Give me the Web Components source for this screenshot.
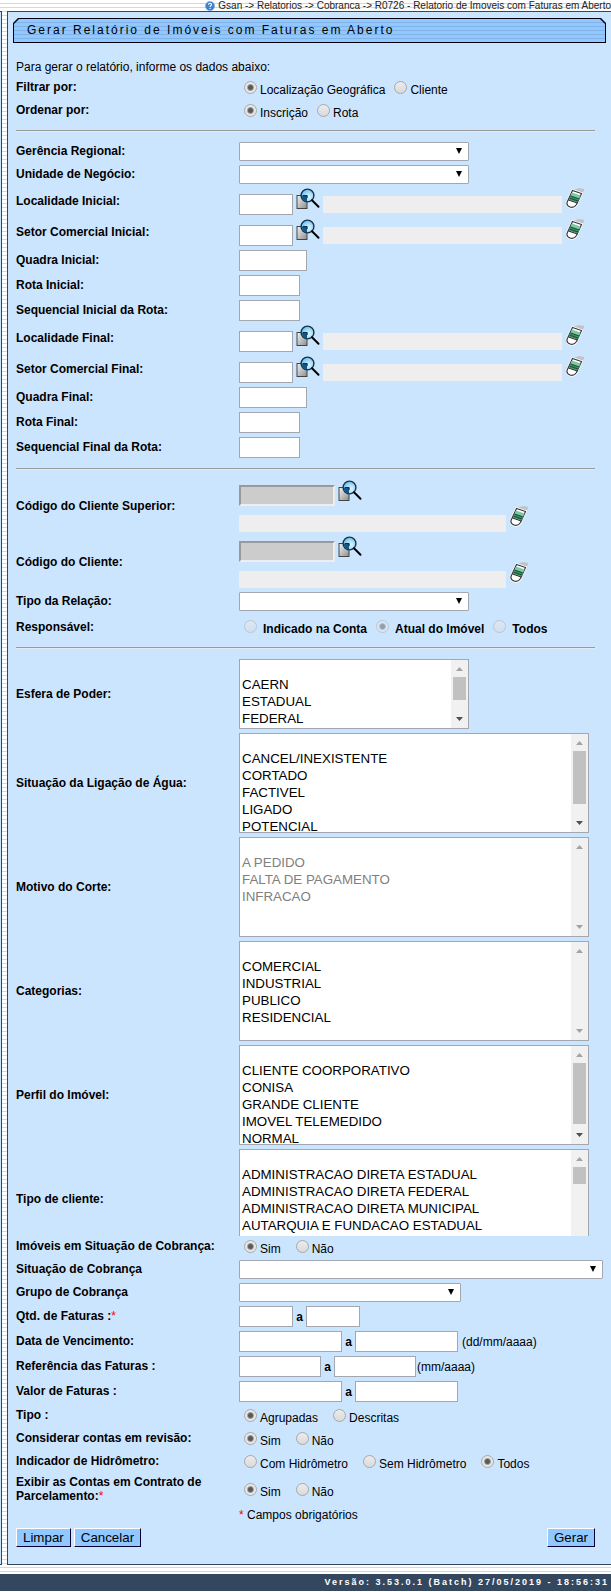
<!DOCTYPE html>
<html lang="pt-BR">
<head>
<meta charset="utf-8">
<title>Gsan - Relatório de Imóveis com Faturas em Aberto</title>
<style>
  body {
    margin: 0;
    background: #fff;
    color: #000;
    font: 12px/14px "Liberation Sans", Arial, sans-serif;
  }
</style>
</head>
<body>

<report-page>
  <trail-bar slot="trail">Gsan -&gt; Relatorios -&gt; Cobranca -&gt; R0726 - Relatorio de Imoveis com Faturas em Aberto</trail-bar>
  <title-bar>Gerar Relatório de Imóveis com Faturas em Aberto</title-bar>

  <report-form>
    <div>Para gerar o relatório, informe os dados abaixo:</div>
    <radio-row label="Filtrar por:" options="Localização Geográfica|Cliente" checked="0"></radio-row>
    <radio-row label="Ordenar por:" options="Inscrição|Rota" checked="0"></radio-row>
    <line-row></line-row>

    <select-row label="Gerência Regional:" width="230px"></select-row>
    <select-row label="Unidade de Negócio:" width="230px"></select-row>
    <lookup-row label="Localidade Inicial:"></lookup-row>
    <lookup-row label="Setor Comercial Inicial:"></lookup-row>
    <text-row label="Quadra Inicial:" width="68px"></text-row>
    <text-row label="Rota Inicial:" width="61px"></text-row>
    <text-row label="Sequencial Inicial da Rota:" width="61px"></text-row>
    <lookup-row label="Localidade Final:"></lookup-row>
    <lookup-row label="Setor Comercial Final:"></lookup-row>
    <text-row label="Quadra Final:" width="68px"></text-row>
    <text-row label="Rota Final:" width="61px"></text-row>
    <text-row label="Sequencial Final da Rota:" width="61px"></text-row>
    <line-row></line-row>

    <client-row label="Código do Cliente Superior:"></client-row>
    <client-row label="Código do Cliente:"></client-row>
    <select-row label="Tipo da Relação:" width="230px"></select-row>
    <radio-row class="strong" label="Responsável:" options="Indicado na Conta|Atual do Imóvel|Todos" checked="1" disabled></radio-row>
    <line-row></line-row>

    <list-row label="Esfera de Poder:" width="230px" height="70px" thumb="23px"
      options="CAERN|ESTADUAL|FEDERAL|MUNICIPAL|PARTICULAR"></list-row>
    <list-row label="Situação da Ligação de Água:" thumb="53px"
      options="CANCEL/INEXISTENTE|CORTADO|FACTIVEL|LIGADO|POTENCIAL|SUPRIMIDO"></list-row>
    <list-row label="Motivo do Corte:" disabled
      options="A PEDIDO|FALTA DE PAGAMENTO|INFRACAO"></list-row>
    <list-row label="Categorias:"
      options="COMERCIAL|INDUSTRIAL|PUBLICO|RESIDENCIAL"></list-row>
    <list-row label="Perfil do Imóvel:" thumb="61px"
      options="CLIENTE COORPORATIVO|CONISA|GRANDE CLIENTE|IMOVEL TELEMEDIDO|NORMAL|SOCIAL"></list-row>
    <list-row class="cut" label="Tipo de cliente:" thumb="17px"
      options="ADMINISTRACAO DIRETA ESTADUAL|ADMINISTRACAO DIRETA FEDERAL|ADMINISTRACAO DIRETA MUNICIPAL|AUTARQUIA E FUNDACAO ESTADUAL"></list-row>

    <radio-row class="wide" label="Imóveis em Situação de Cobrança:" options="Sim|Não" checked="0"></radio-row>
    <select-row label="Situação de Cobrança" width="calc(100% + 8px)"></select-row>
    <select-row label="Grupo de Cobrança" width="222px"></select-row>
    <text-row label="Qtd. de Faturas :" required width="54px" range></text-row>
    <text-row label="Data de Vencimento:" width="103px" range hint="(dd/mm/aaaa)"></text-row>
    <text-row class="tight" label="Referência das Faturas :" width="82px" range hint="(mm/aaaa)"></text-row>
    <text-row label="Valor de Faturas :" width="103px" range></text-row>
    <radio-row class="wide" label="Tipo :" options="Agrupadas|Descritas" checked="0"></radio-row>
    <radio-row class="wide" label="Considerar contas em revisão:" options="Sim|Não" checked="0"></radio-row>
    <radio-row class="wide" label="Indicador de Hidrômetro:" options="Com Hidrômetro|Sem Hidrômetro|Todos" checked="2"></radio-row>
    <radio-row class="wide" label="Exibir as Contas em Contrato de Parcelamento:" required options="Sim|Não" checked="0"></radio-row>
    <note-row>Campos obrigatórios</note-row>

    <form-button slot="left">Limpar</form-button>
    <form-button slot="left">Cancelar</form-button>
    <form-button slot="right">Gerar</form-button>
  </report-form>

  <span slot="version">Versão: 3.53.0.1 (Batch) 27/05/2019 - 18:56:31</span>
</report-page>

<script>
const SEARCH_ICON = `
  <svg width="24" height="22" viewBox="0 0 24 22" aria-hidden="true">
    <defs>
      <linearGradient id="sheet" x1="0" y1="0" x2="1" y2="1">
        <stop offset="0" stop-color="#f4f4f4"/><stop offset="1" stop-color="#8c8c8c"/>
      </linearGradient>
      <radialGradient id="lens" cx=".6" cy=".6" r=".6">
        <stop offset="0" stop-color="#e8f8ff"/><stop offset="1" stop-color="#6cc0f0"/>
      </radialGradient>
    </defs>
    <rect x="1" y="7.5" width="10" height="13" fill="url(#sheet)" stroke="#444"/>
    <circle cx="11.5" cy="7.5" r="6.4" fill="url(#lens)" stroke="#143448" stroke-width="1.4"/>
    <path d="M5.8 7.5H11v5.600C8 13.200 5.800 11 5.800 7.500z" fill="#10588c"/>
    <path d="M7 7.500H11.200V10" fill="none" stroke="#0a2c48"/>
    <path d="M16 12.300l6.500 6.500" stroke="#000" stroke-width="2" stroke-linecap="round"/>
  </svg>`;

const ERASER_ICON = `
  <svg width="19" height="21" viewBox="0 0 19 21" aria-hidden="true">
    <path d="M8 1.500L13 0L18.500 1L16 7z" fill="#c0c4c8"/>
    <path d="M6.500 2.500L15.500 5.500L10.500 16.500Q8 20.500 4 19Q0 17.500 1.200 14z" fill="#fff" stroke="#fff" stroke-width="2.500"/>
    <path d="M6.500 2.500L15.500 5.500L10.500 16.500Q8 20.500 4 19Q0 17.500 1.200 14z" fill="#fff" stroke="#333" stroke-width="1.100"/>
    <path d="M6 4.500L14.500 7.500L11.500 14L3 11z" fill="#7cc8a4"/>
    <path d="M4.600 7.500L13.300 10.500L11.500 14.500L2.800 11.500z" fill="#3c9468"/>
    <path d="M4.400 8L13 11M3.400 10L12 13" stroke="#123c28" stroke-width=".8"/>
    <path d="M2.500 12L11.300 15" stroke="#222"/>
  </svg>`;

const CONTROL_STYLES = `
  input, select, button {
    box-sizing: border-box;
    margin: 0;
    padding: 0;
    font-family: inherit;
    color: inherit;
  }
  input[type="text"] {
    height: 21px;
    border: 1px solid #a3a8b0;
    background: #fff;
    padding: 1px;
  }
  input.name {
    height: 17px;
    border: 0;
    background: #eee;
  }
  .icon {
    display: flex;
    align-items: flex-start;
    flex: none;
    border: 0;
    background: none;
    cursor: pointer;
  }
`;

// Base of every labelled line of the form
class FormRow extends HTMLElement {
  constructor() {
    super();
    this.attachShadow({ mode: "open" });
  }

  connectedCallback() {
    const required = this.hasAttribute("required") ? '<span class="required">*</span>' : "";
    this.shadowRoot.innerHTML = `
      <style>
        :host { display: block; }
        .row {
          display: grid;
          grid-template-columns: 223px minmax(0, 1fr);
          align-items: center;
        }
        .caption { font-weight: bold; padding: 0 24px 1px 0; }
        .required { color: #f00; font-weight: normal; }
        ${CONTROL_STYLES}
        ${this.styles()}
      </style>
      <div class="row">
        ${this.caption(this.getAttribute("label") + required)}
        <div class="controls">${this.controls()}</div>
      </div>
    `;
  }

  caption(text) {
    return `<label class="caption" for="field">${text}</label>`;
  }

  styles() {
    return "";
  }

  get options() {
    return this.getAttribute("options").split("|");
  }

  get disabled() {
    return this.hasAttribute("disabled") ? "disabled" : "";
  }
}

class TextRow extends FormRow {
  styles() {
    return `
      .controls { display: flex; align-items: center; }
      input[type="text"] { width: ${this.getAttribute("width")}; }
      .to { width: 13px; text-align: center; font-weight: bold; }
      .hint { margin-left: 4px; }
      :host(.tight) .hint { margin-left: 1px; }
    `;
  }

  controls() {
    const hint = this.getAttribute("hint");
    let html = `<input type="text" id="field">`;
    if (this.hasAttribute("range")) {
      html += `<label class="to" for="end">a</label><input type="text" id="end">`;
    }
    if (hint) html += `<span class="hint">${hint}</span>`;
    return html;
  }
}

class SelectRow extends FormRow {
  styles() {
    return `
      .box { position: relative; width: ${this.getAttribute("width")}; }
      select {
        display: block;
        width: 100%;
        height: 19px;
        appearance: none;
        border: 1px solid #a3a8b0;
        border-radius: 1px;
        background: #fff;
      }
      svg { position: absolute; right: 7px; top: 6px; pointer-events: none; }
    `;
  }

  controls() {
    return `
      <div class="box">
        <select id="field"><option></option></select>
        <svg width="6" height="6" viewBox="0 0 6 6" aria-hidden="true"><path d="M0 0h6L3 6z"/></svg>
      </div>
    `;
  }
}

class RadioRow extends FormRow {
  caption(text) {
    return `<div class="caption" id="caption">${text}</div>`;
  }

  styles() {
    return `
      .controls {
        display: flex;
        align-items: flex-start;
        gap: 4px;
        height: 19px;
        white-space: nowrap;
      }
      :host(.wide) .controls { gap: 10px; }
      .choice { display: flex; align-items: flex-start; gap: 3px; }
      .choice span { padding-top: 5px; }
      input {
        appearance: none;
        width: 13px;
        height: 13px;
        margin: 3px 0 0 5px;
        border: 1px solid #a8a8a8;
        border-radius: 50%;
        background: linear-gradient(#ececec, #dadada);
      }
      input:checked {
        background: radial-gradient(circle, #5a5a5a 2px, #e8e8e8 4px);
      }
      input:disabled { opacity: .5; }
      :host(.strong) { padding-top: 2px; }
      :host(.strong) .choice { gap: 6px; font-weight: bold; }
      :host(.strong) .controls { height: 20px; }
    `;
  }

  controls() {
    const checked = Number(this.getAttribute("checked"));
    const choices = this.options.map((text, i) => `
      <label class="choice">
        <input type="radio" name="choice" ${i === checked ? "checked" : ""} ${this.disabled}>
        <span>${text}</span>
      </label>`);
    return choices.join("");
  }

  connectedCallback() {
    super.connectedCallback();
    const group = this.shadowRoot.querySelector(".controls");
    group.setAttribute("role", "radiogroup");
    group.setAttribute("aria-labelledby", "caption");
  }
}

// Code box, search button, read-only name and eraser on one line
class LookupRow extends FormRow {
  styles() {
    return `
      .controls { display: flex; height: 27px; margin-right: 10px; }
      #field { width: 54px; align-self: flex-end; }
      .search { margin: 0 3px; }
      .name { flex: 1; min-width: 0; align-self: flex-end; margin: 0 4px 2px 0; }
    `;
  }

  controls() {
    return `
      <input type="text" id="field">
      <button class="icon search" type="button" aria-label="Pesquisar">${SEARCH_ICON}</button>
      <input type="text" class="name" aria-label="Descrição" readonly>
      <button class="icon" type="button" aria-label="Apagar">${ERASER_ICON}</button>
    `;
  }
}

class ClientRow extends FormRow {
  styles() {
    return `
      .line { display: flex; height: 26px; }
      #field {
        width: 96px;
        align-self: flex-end;
        border: 2px solid;
        border-color: #999 #eee #eee #999;
        background: #ccc;
      }
      .search { margin-left: 3px; }
      input.name { width: 267px; align-self: flex-end; margin-right: 4px; }
    `;
  }

  controls() {
    return `
      <div class="line">
        <input type="text" id="field" disabled>
        <button class="icon search" type="button" aria-label="Pesquisar">${SEARCH_ICON}</button>
      </div>
      <div class="line">
        <input type="text" class="name" aria-label="Nome do cliente" readonly>
        <button class="icon" type="button" aria-label="Apagar">${ERASER_ICON}</button>
      </div>
    `;
  }
}

class ListRow extends FormRow {
  styles() {
    return `
      .box {
        box-sizing: border-box;
        display: flex;
        width: ${this.getAttribute("width") || "350px"};
        height: ${this.getAttribute("height") || "100px"};
        border: 1px solid #a3a8b0;
        background: #fff;
      }
      select {
        flex: 1;
        min-width: 0;
        border: 0;
        border-radius: 0;
        background: none;
        overflow-y: auto;
        scrollbar-width: none;
        outline: 0;
      }
      option { height: 17px; min-height: 17px; line-height: 16px; padding: 0 2px; box-sizing: border-box; }
      select:disabled, option:disabled { color: #808080; opacity: 1; }
      .bar {
        display: flex;
        flex-direction: column;
        align-items: center;
        width: 17px;
        background: #f1f1f1;
      }
      .bar svg { flex: none; fill: #a3a3a3; }
      .bar svg.on { fill: #505050; }
      .thumb { width: 13px; height: ${this.getAttribute("thumb") || 0}; background: #c1c1c1; }
      .bar svg:last-child { margin-top: auto; }
      :host(.cut) { height: 87px; margin-bottom: -3px; overflow: hidden; }
    `;
  }

  controls() {
    const items = this.options.map((text) => `<option>${text}</option>`).join("");
    const on = this.hasAttribute("thumb") ? "on" : "";
    return `
      <div class="box">
        <select id="field" multiple ${this.disabled}><option></option>${items}</select>
        <div class="bar" aria-hidden="true">
          <svg width="17" height="17" viewBox="0 0 17 17"><path d="M5 11h7l-3.500 -4z"/></svg>
          <div class="thumb"></div>
          <svg class="${on}" width="17" height="17" viewBox="0 0 17 17"><path d="M5 6h7l-3.500 4z"/></svg>
        </div>
      </div>
    `;
  }

  connectedCallback() {
    super.connectedCallback();
    const select = this.shadowRoot.querySelector("select");
    const thumb = this.shadowRoot.querySelector(".thumb");
    select.addEventListener("scroll", () => {
      const track = select.clientHeight - 34 - thumb.offsetHeight;
      const range = select.scrollHeight - select.clientHeight;
      thumb.style.marginTop = range > 0 ? `${Math.round(select.scrollTop / range * track)}px` : 0;
    });
  }
}

class LineRow extends HTMLElement {
  constructor() {
    super();
    this.attachShadow({ mode: "open" }).innerHTML = `
      <style>
        :host { display: block; padding: 6px 0; }
        hr { margin: 0; border: 0; border-top: 1px solid #9a9a9a; border-bottom: 1px solid #e4eaf0; }
      </style>
      <hr>
    `;
  }
}

class NoteRow extends HTMLElement {
  constructor() {
    super();
    this.attachShadow({ mode: "open" }).innerHTML = `
      <style>
        :host { display: block; padding-left: 223px; }
        span { color: #f00; }
      </style>
      <span>*</span> <slot></slot>
    `;
  }
}

class FormButton extends HTMLElement {
  constructor() {
    super();
    this.attachShadow({ mode: "open" }).innerHTML = `
      <style>
        :host { display: block; }
        button {
          display: block;
          height: 19px;
          margin: 0;
          padding: 0 6px;
          border: 1px solid;
          border-color: #fff #003 #003 #fff;
          background: #90c8ff;
          color: #000;
          font-family: inherit;
          line-height: 16px;
        }
      </style>
      <button type="button"><slot></slot></button>
    `;
  }
}

class ReportForm extends HTMLElement {
  constructor() {
    super();
    this.attachShadow({ mode: "open" }).innerHTML = `
      <style>
        :host { display: block; padding: 17px 16px 17px 8px; }
        .rows { display: flex; flex-direction: column; gap: 4px; }
        .buttons { display: flex; justify-content: space-between; margin-top: 6px; }
        .buttons div { display: flex; gap: 3px; }
      </style>
      <form>
        <div class="rows"><slot></slot></div>
        <div class="buttons">
          <div><slot name="left"></slot></div>
          <div><slot name="right"></slot></div>
        </div>
      </form>
    `;
  }
}

class TitleBar extends HTMLElement {
  constructor() {
    super();
    this.attachShadow({ mode: "open" }).innerHTML = `
      <style>
        :host {
          display: block;
          margin: 6px 5px 0;
          padding: 1px;
          background: #001;
          clip-path: polygon(5px 0, calc(100% - 5px) 0, 100% 5px, 100% 100%, 0 100%, 0 5px);
        }
        h1 {
          margin: 0;
          padding: 1px 13px;
          background: repeating-linear-gradient(#90c8ff 0 3px, #80b2e8 3px 4px);
          clip-path: polygon(5px 0, calc(100% - 5px) 0, 100% 5px, 100% 100%, 0 100%, 0 5px);
          font-size: 12px;
          line-height: 21px;
          font-weight: normal;
          letter-spacing: 2px;
        }
      </style>
      <h1><slot></slot></h1>
    `;
  }
}

class TrailBar extends HTMLElement {
  constructor() {
    super();
    this.attachShadow({ mode: "open" }).innerHTML = `
      <style>
        :host {
          display: flex;
          justify-content: flex-end;
          align-items: center;
          gap: 3px;
          height: 11px;
          color: #222;
          font-size: 10px;
          line-height: 11px;
          white-space: nowrap;
          overflow: hidden;
        }
        svg { flex: none; }
      </style>
      <svg width="10" height="10" viewBox="0 0 10 10" aria-hidden="true">
        <circle cx="5" cy="5" r="4.600" fill="#3c82d0" stroke="#7aa8dc" stroke-width=".6"/>
        <path d="M3.500 3.800C3.500 1.800 6.600 1.800 6.500 3.700C6.400 4.800 5 4.700 5 6M5 7v1" fill="none" stroke="#fff" stroke-width="1.100"/>
      </svg>
      <slot></slot>
    `;
  }
}

class ReportPage extends HTMLElement {
  constructor() {
    super();
    this.attachShadow({ mode: "open" }).innerHTML = `
      <style>
        :host {
          display: block;
          background: repeating-linear-gradient(#fff 0 3px, #c4dcf0 3px 4px);
        }
        .body { display: flex; }
        .edge {
          flex: none;
          box-sizing: border-box;
          width: 2px;
          margin-right: 5px;
          border: solid #33475f;
          border-width: 1px 1px 1px 0;
          background: #cce5ff;
        }
        main {
          flex: 1;
          min-width: 0;
          border: solid #33475f;
          border-width: 1px 0 1px 1px;
          background: #cce5ff;
        }
        footer {
          margin-top: 9px;
          padding-right: 2px;
          background: #33475f;
          color: #fff;
          font-size: 9px;
          line-height: 17px;
          font-weight: bold;
          letter-spacing: 2px;
          text-align: right;
          white-space: nowrap;
        }
      </style>
      <slot name="trail"></slot>
      <div class="body">
        <div class="edge"></div>
        <main><slot></slot></main>
      </div>
      <footer><slot name="version"></slot></footer>
    `;
  }
}

customElements.define("text-row", TextRow);
customElements.define("select-row", SelectRow);
customElements.define("radio-row", RadioRow);
customElements.define("lookup-row", LookupRow);
customElements.define("client-row", ClientRow);
customElements.define("list-row", ListRow);
customElements.define("line-row", LineRow);
customElements.define("note-row", NoteRow);
customElements.define("form-button", FormButton);
customElements.define("report-form", ReportForm);
customElements.define("title-bar", TitleBar);
customElements.define("trail-bar", TrailBar);
customElements.define("report-page", ReportPage);
</script>
</body>
</html>
